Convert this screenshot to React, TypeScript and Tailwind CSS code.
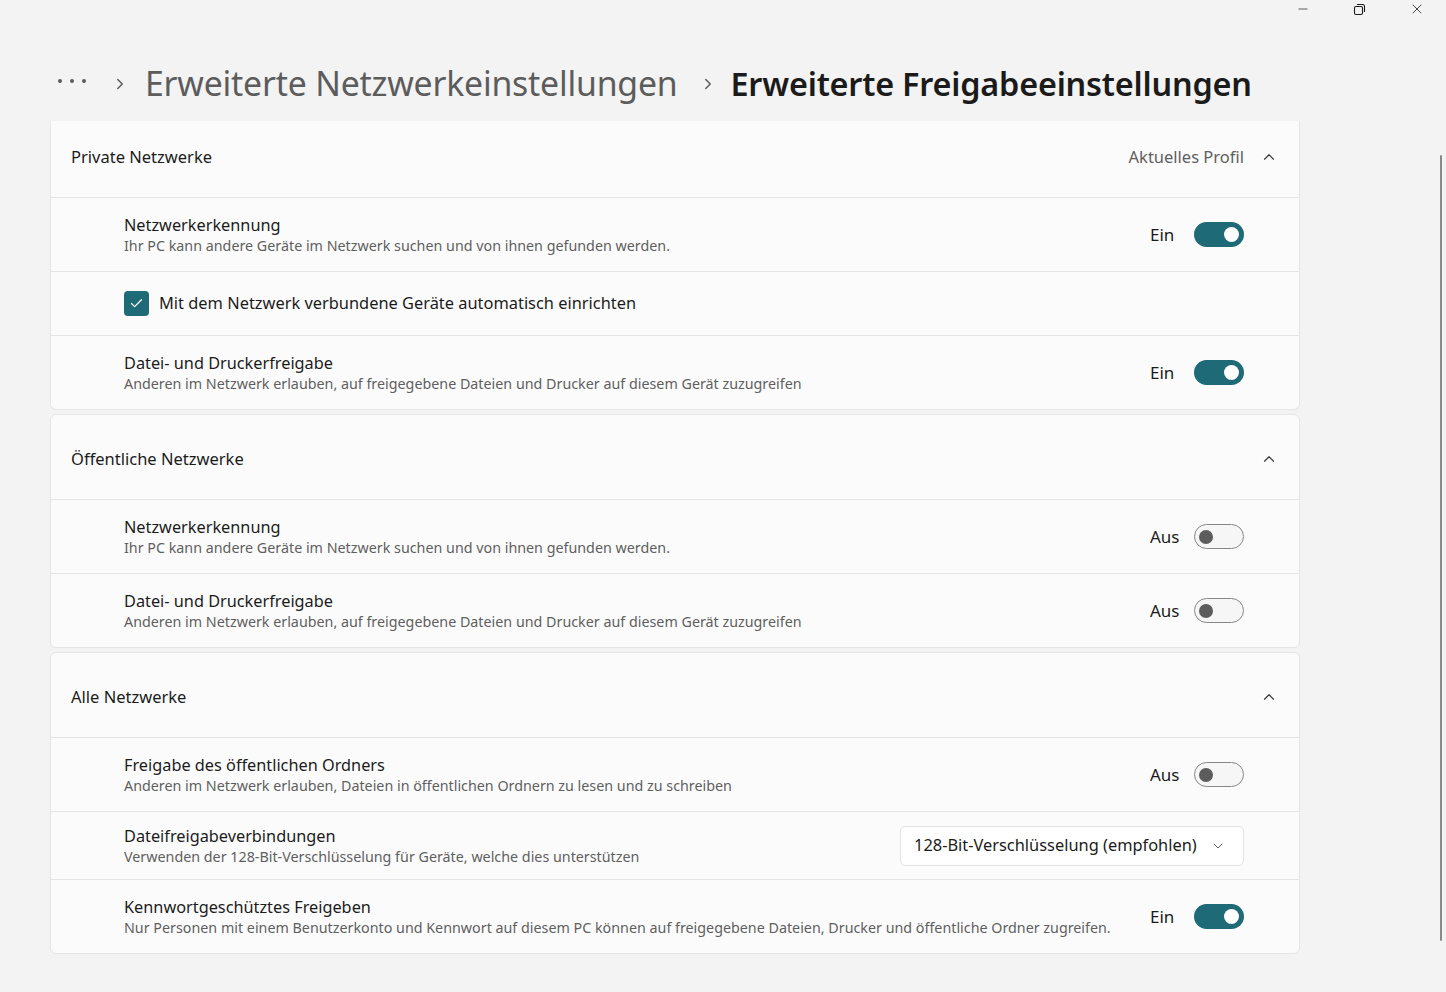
import { ChevronRight, ChevronUp, ChevronDown, Check, Minus, X } from 'lucide-react';

type Row =
  | { kind: 'toggle'; title: string; desc: string; on: boolean }
  | { kind: 'check'; label: string }
  | { kind: 'select'; title: string; desc: string; value: string };

interface Section {
  title: string;
  right?: string;
  rows: Row[];
  clipped?: boolean;
}

const SECTIONS: Section[] = [
  {
    title: 'Private Netzwerke',
    right: 'Aktuelles Profil',
    clipped: true,
    rows: [
      { kind: 'toggle', title: 'Netzwerkerkennung', desc: 'Ihr PC kann andere Geräte im Netzwerk suchen und von ihnen gefunden werden.', on: true },
      { kind: 'check', label: 'Mit dem Netzwerk verbundene Geräte automatisch einrichten' },
      { kind: 'toggle', title: 'Datei- und Druckerfreigabe', desc: 'Anderen im Netzwerk erlauben, auf freigegebene Dateien und Drucker auf diesem Gerät zuzugreifen', on: true },
    ],
  },
  {
    title: 'Öffentliche Netzwerke',
    rows: [
      { kind: 'toggle', title: 'Netzwerkerkennung', desc: 'Ihr PC kann andere Geräte im Netzwerk suchen und von ihnen gefunden werden.', on: false },
      { kind: 'toggle', title: 'Datei- und Druckerfreigabe', desc: 'Anderen im Netzwerk erlauben, auf freigegebene Dateien und Drucker auf diesem Gerät zuzugreifen', on: false },
    ],
  },
  {
    title: 'Alle Netzwerke',
    rows: [
      { kind: 'toggle', title: 'Freigabe des öffentlichen Ordners', desc: 'Anderen im Netzwerk erlauben, Dateien in öffentlichen Ordnern zu lesen und zu schreiben', on: false },
      { kind: 'select', title: 'Dateifreigabeverbindungen', desc: 'Verwenden der 128-Bit-Verschlüsselung für Geräte, welche dies unterstützen', value: '128-Bit-Verschlüsselung (empfohlen)' },
      { kind: 'toggle', title: 'Kennwortgeschütztes Freigeben', desc: 'Nur Personen mit einem Benutzerkonto und Kennwort auf diesem PC können auf freigegebene Dateien, Drucker und öffentliche Ordner zugreifen.', on: true },
    ],
  },
];

function Toggle({ on }: { on: boolean }) {
  return (
    <div className="flex items-center">
      <span className="text-[17px] text-[#1b1b1b] w-[44px]">{on ? 'Ein' : 'Aus'}</span>
      {on ? (
        <div className="w-[50px] h-[25px] rounded-full bg-[#1e6a77] flex items-center justify-end pr-[5px]">
          <div className="w-[15px] h-[15px] rounded-full bg-white" />
        </div>
      ) : (
        <div className="w-[50px] h-[25px] rounded-full border border-[#878787] bg-[#f6f6f6] flex items-center pl-[4px]">
          <div className="w-[14px] h-[14px] rounded-full bg-[#5c5c5c]" />
        </div>
      )}
    </div>
  );
}

function SettingRow({ row }: { row: Row }) {
  if (row.kind === 'check') {
    return (
      <div className="h-[64px] flex items-center pl-[73px] border-t border-[#e5e5e5]">
        <div className="w-[25px] h-[25px] rounded-[4px] bg-[#1e6a77] flex items-center justify-center">
          <Check size={15} color="white" strokeWidth={2} />
        </div>
        <span className="ml-[10px] text-[16.4px] text-[#1b1b1b]">{row.label}</span>
      </div>
    );
  }
  return (
    <div className={`flex items-center pl-[73px] pr-[55px] border-t border-[#e5e5e5] ${row.kind === 'select' ? 'h-[68px]' : 'h-[74px]'}`}>
      <div className="flex-1 flex flex-col">
        <span className="text-[16.3px] leading-[22px] text-[#1b1b1b]">{row.title}</span>
        <span className="text-[14.3px] leading-[19px] text-[#5f5f5f]">{row.desc}</span>
      </div>
      {row.kind === 'toggle' ? (
        <Toggle on={row.on} />
      ) : (
        <div className="w-[344px] h-[40px] rounded-[5px] bg-white border border-[#e3e3e3] flex items-center pl-[13px] pr-[17px]">
          <span className="flex-1 text-[16.4px] text-[#1b1b1b]">{row.value}</span>
          <ChevronDown size={16} color="#5f5f5f" strokeWidth={1.5} />
        </div>
      )}
    </div>
  );
}

function Card({ s }: { s: Section }) {
  return (
    <div className={`bg-[#fbfbfb] border border-[#e5e5e5] ${s.clipped ? 'border-t-0 rounded-b-[6px]' : 'rounded-[6px]'}`}>
      <div className={`flex items-center pl-[20px] pr-[21px] ${s.clipped ? 'h-[76px] pb-[4px]' : 'h-[84px] pt-[4px]'}`}>
        <span className="flex-1 text-[16.5px] text-[#1b1b1b]">{s.title}</span>
        {s.right && <span className="text-[16.5px] text-[#5f5f5f] mr-[16px]">{s.right}</span>}
        <ChevronUp size={18} color="#333" strokeWidth={1.5} />
      </div>
      {s.rows.map((r, i) => (
        <SettingRow key={i} row={r} />
      ))}
    </div>
  );
}

export default function App() {
  return (
    <div
      className="relative w-[1446px] h-[992px] bg-[#f3f3f3] overflow-hidden"
      style={{ fontFamily: "'Noto Sans', 'Open Sans', sans-serif" }}
    >
      {/* window controls */}
      <div className="flex justify-end items-center h-[18px] pr-[21px] gap-[43px] text-[#1b1b1b]">
        <Minus size={14} strokeWidth={1.2} />
        <svg width="13" height="13" viewBox="0 0 13 13" fill="none" stroke="#1b1b1b" strokeWidth="1.1">
          <rect x="1.5" y="3.5" width="8" height="8" rx="1.5" />
          <path d="M4 1.5h5.5a2 2 0 0 1 2 2V9" />
        </svg>
        <X size={16} strokeWidth={1.2} />
      </div>

      {/* breadcrumb */}
      <div className="flex items-center h-[103px] pl-[58px] pt-[28px]">
        <div className="flex items-center gap-[8px] -mt-[6px]">
          <div className="w-[4px] h-[4px] rounded-full bg-[#5c5c5c]" />
          <div className="w-[4px] h-[4px] rounded-full bg-[#5c5c5c]" />
          <div className="w-[4px] h-[4px] rounded-full bg-[#5c5c5c]" />
        </div>
        <ChevronRight size={18} color="#5c5c5c" strokeWidth={2} className="ml-[25px]" />
        <span className="ml-[16px] text-[33.8px] text-[#5c5c5c] tracking-[-0.2px]">Erweiterte Netzwerkeinstellungen</span>
        <ChevronRight size={18} color="#5c5c5c" strokeWidth={2} className="ml-[21px]" />
        <span className="ml-[14px] text-[32.4px] font-semibold text-[#1b1b1b] tracking-[-0.2px]">Erweiterte Freigabeeinstellungen</span>
      </div>

      <div className="ml-[50px] w-[1250px] flex flex-col gap-[4px]">
        {SECTIONS.map((s) => (
          <Card key={s.title} s={s} />
        ))}
      </div>

      {/* scrollbar */}
      <div className="absolute left-[1440px] top-[155px] w-[2px] h-[786px] bg-[#8a8a8a] rounded-full" />
    </div>
  );
}
